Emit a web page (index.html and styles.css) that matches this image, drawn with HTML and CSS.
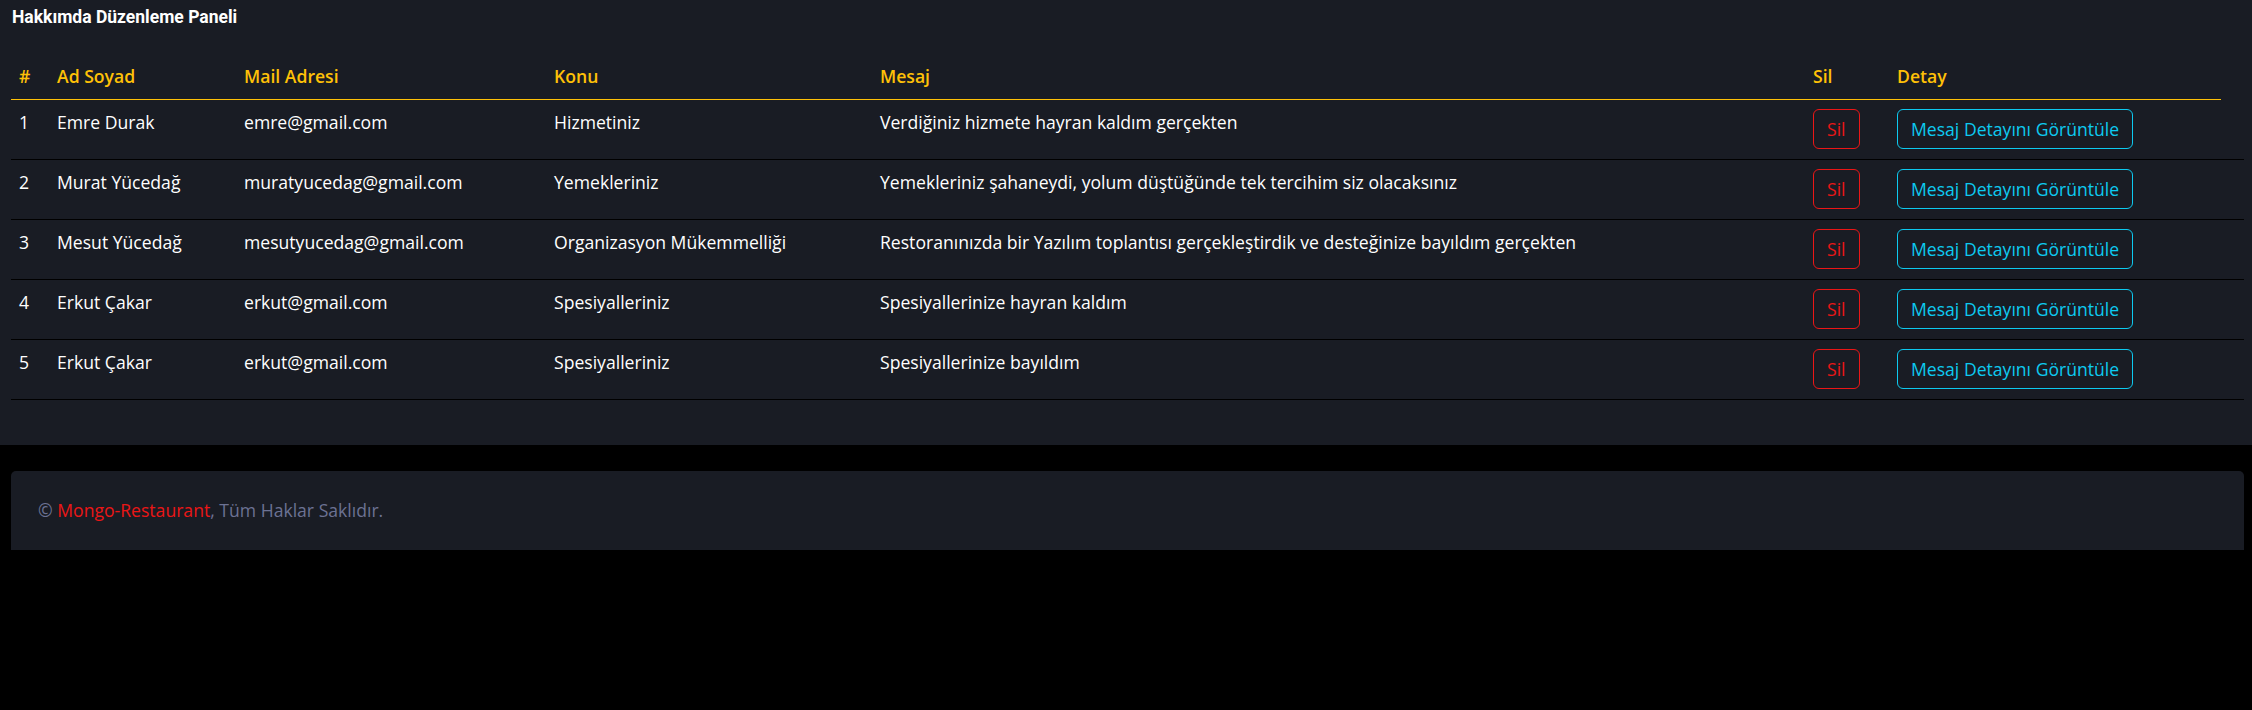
FILE: index.html
```html
<!DOCTYPE html>
<html lang="tr">
<head>
<meta charset="utf-8">
<title>Hakkımda Düzenleme Paneli</title>
<link rel="stylesheet" href="styles.css">
</head>
<body>
<div class="panel">
  <h6 class="panel-title">Hakkımda Düzenleme Paneli</h6>
  <table class="msg-table">
    <colgroup>
      <col class="c-no"><col class="c-name"><col class="c-mail"><col class="c-topic"><col class="c-msg"><col class="c-del"><col class="c-det"><col class="c-extra">
    </colgroup>
    <thead>
      <tr><th>#</th><th>Ad Soyad</th><th>Mail Adresi</th><th>Konu</th><th>Mesaj</th><th>Sil</th><th>Detay</th></tr>
    </thead>
    <tbody>
      <tr><td>1</td><td>Emre Durak</td><td>emre@gmail.com</td><td>Hizmetiniz</td><td>Verdiğiniz hizmete hayran kaldım gerçekten</td><td><a class="btn btn-red">Sil</a></td><td><a class="btn btn-cyan">Mesaj Detayını Görüntüle</a></td><td></td></tr>
      <tr><td>2</td><td>Murat Yücedağ</td><td>muratyucedag@gmail.com</td><td>Yemekleriniz</td><td>Yemekleriniz şahaneydi, yolum düştüğünde tek tercihim siz olacaksınız</td><td><a class="btn btn-red">Sil</a></td><td><a class="btn btn-cyan">Mesaj Detayını Görüntüle</a></td><td></td></tr>
      <tr><td>3</td><td>Mesut Yücedağ</td><td>mesutyucedag@gmail.com</td><td>Organizasyon Mükemmelliği</td><td>Restoranınızda bir Yazılım toplantısı gerçekleştirdik ve desteğinize bayıldım gerçekten</td><td><a class="btn btn-red">Sil</a></td><td><a class="btn btn-cyan">Mesaj Detayını Görüntüle</a></td><td></td></tr>
      <tr><td>4</td><td>Erkut Çakar</td><td>erkut@gmail.com</td><td>Spesiyalleriniz</td><td>Spesiyallerinize hayran kaldım</td><td><a class="btn btn-red">Sil</a></td><td><a class="btn btn-cyan">Mesaj Detayını Görüntüle</a></td><td></td></tr>
      <tr><td>5</td><td>Erkut Çakar</td><td>erkut@gmail.com</td><td>Spesiyalleriniz</td><td>Spesiyallerinize bayıldım</td><td><a class="btn btn-red">Sil</a></td><td><a class="btn btn-cyan">Mesaj Detayını Görüntüle</a></td><td></td></tr>
    </tbody>
  </table>
</div>
<footer class="footer">
  <div class="footer-box">© <a class="brand">Mongo-Restaurant</a>, Tüm Haklar Saklıdır.</div>
</footer>
</body>
</html>
```
FILE: styles.css
```css
* { box-sizing: border-box; }
html, body { margin: 0; padding: 0; }
body {
  background: #000;
  font-family: "Open Sans", "Liberation Sans", sans-serif;
  font-size: 17.6px;
  line-height: 26.4px;
  color: #6C7293;
}
.panel {
  background: #191C24;
  padding: 7px 8px 45px 11px;
}
.panel-title {
  margin: 0;
  font-family: Roboto, "Liberation Sans", sans-serif;
  font-weight: 700;
  font-size: 17.5px;
  line-height: 21px;
  color: #fff;
  padding-left: 1px;
}
.msg-table {
  margin-top: 26.5px;
  width: 2233px;
  border-collapse: collapse;
  table-layout: fixed;
}
.c-no { width: 38px; }
.c-name { width: 187px; }
.c-mail { width: 310px; }
.c-topic { width: 326px; }
.c-msg { width: 933px; }
.c-del { width: 84px; }
.c-det { width: 332px; }
.c-extra { width: 23px; }
.msg-table th {
  text-align: left;
  font-weight: 600;
  color: #FFC107;
  padding: 8px 8px 10px;
  border-bottom: 1px solid #FFC107;
  white-space: nowrap;
}
.msg-table td {
  color: #fff;
  vertical-align: top;
  padding: 9px 8px 10px;
  border-bottom: 1px solid #000;
  white-space: nowrap;
}
.btn {
  display: inline-block;
  vertical-align: top;
  padding: 6px 13px;
  line-height: 26px;
  font-size: 17.6px;
  border: 1px solid;
  border-radius: 6px;
  background: transparent;
  cursor: pointer;
}
.btn-red { color: #EB1616; border-color: #EB1616; }
.btn-cyan { color: #0DCAF0; border-color: #0DCAF0; }
.footer {
  padding: 26px 8px 0 11px;
}
.footer-box {
  background: #191C24;
  border-radius: 5px 5px 0 0;
  padding: 26px 24px 26.5px 27px;
  color: #6C7293;
}
.brand { color: #EB1616; }
```
